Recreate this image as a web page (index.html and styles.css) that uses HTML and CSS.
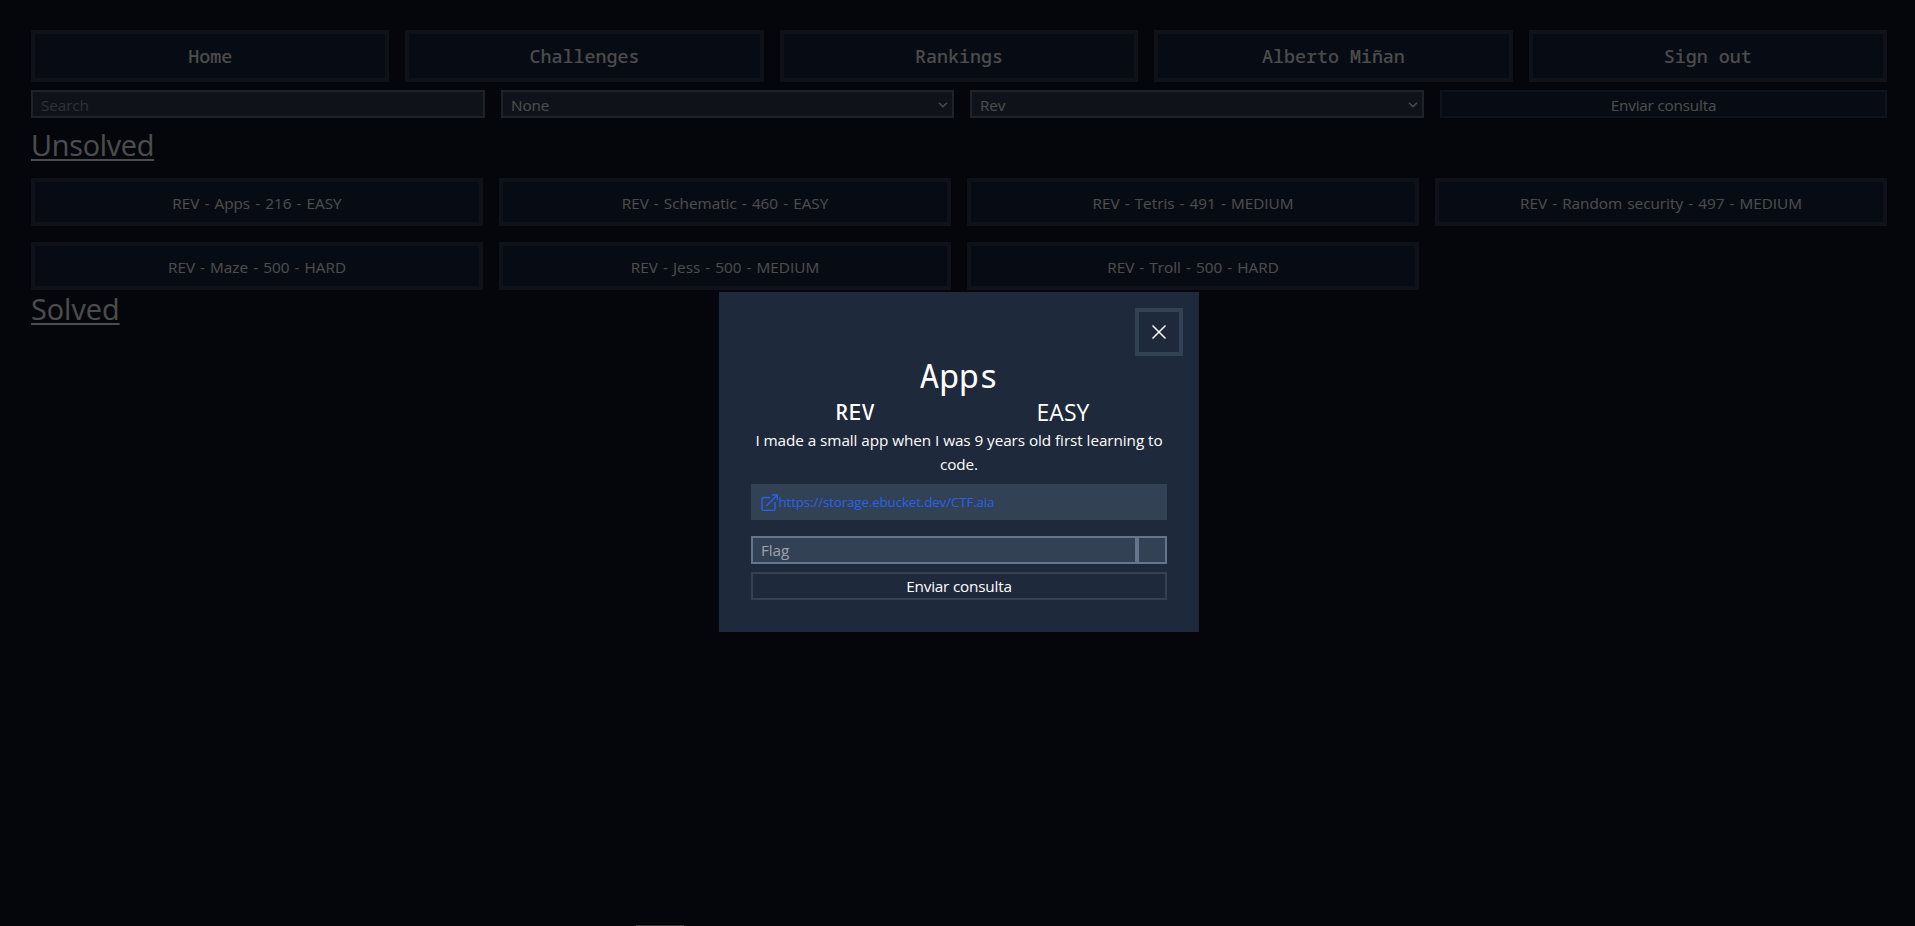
FILE: index.html
```html
<!DOCTYPE html>
<html lang="es">
<head>
<meta charset="utf-8">
<title>Challenges</title>
<link rel="stylesheet" href="styles.css">
</head>
<body>
<div class="page">
  <nav class="nav">
    <a class="nav-link">Home</a>
    <a class="nav-link">Challenges</a>
    <a class="nav-link">Rankings</a>
    <a class="nav-link">Alberto Miñan</a>
    <a class="nav-link">Sign out</a>
  </nav>
  <form class="filters">
    <input class="field" type="text" placeholder="Search">
    <div class="field select"><span>None</span><svg class="chevron" viewBox="0 0 10 6"><path d="M1 0.8 5 4.8 9 0.8"/></svg></div>
    <div class="field select"><span>Rev</span><svg class="chevron" viewBox="0 0 10 6"><path d="M1 0.8 5 4.8 9 0.8"/></svg></div>
    <button class="submit" type="button">Enviar consulta</button>
  </form>
  <h2 class="heading">Unsolved</h2>
  <div class="cards">
    <button class="card">REV - Apps - 216 - EASY</button>
    <button class="card">REV - Schematic - 460 - EASY</button>
    <button class="card">REV - Tetris - 491 - MEDIUM</button>
    <button class="card">REV - Random security - 497 - MEDIUM</button>
    <button class="card">REV - Maze - 500 - HARD</button>
    <button class="card">REV - Jess - 500 - MEDIUM</button>
    <button class="card">REV - Troll - 500 - HARD</button>
  </div>
  <h2 class="heading solved">Solved</h2>
</div>
<div class="overlay">
  <section class="modal">
    <button class="close" aria-label="Close"><svg viewBox="0 0 16 16"><path d="M1.500 1.500 14.500 14.500M14.500 1.500 1.500 14.500"/></svg></button>
    <h1 class="title">Apps</h1>
    <div class="meta"><span class="category">REV</span><span class="difficulty">EASY</span></div>
    <p class="description">I made a small app when I was 9 years old first learning to code.</p>
    <a class="file"><svg class="file-icon" viewBox="0 0 17 17"><path d="M9 3.500H2.500A1.500 1.500 0 0 0 1 5V15A1.500 1.500 0 0 0 2.500 16.500H12.500A1.500 1.500 0 0 0 14 15V8M11 1H16.300V6.300M16.300 1 5 12.300"/></svg><span>https://storage.ebucket.dev/CTF.aia</span></a>
    <form class="flag-form">
      <div class="flag-row"><input class="field flag" type="text" placeholder="Flag"><div class="field status"></div></div>
      <button class="submit" type="button">Enviar consulta</button>
    </form>
  </section>
</div>
<div class="handle"></div>
</body>
</html>
```
FILE: styles.css
```css
* { box-sizing: border-box; margin: 0; padding: 0; }
html, body { height: 100%; overflow: hidden; }
body {
  background: #0f172a;
  color: #fff;
  font: 15.3px/24px "Open Sans", "Noto Sans", sans-serif;
}
button, input { font: inherit; color: inherit; letter-spacing: inherit; }
.page { height: 100%; padding: 30px 28px 0 31px; }
.nav { display: grid; grid-template-columns: repeat(5, 1fr); gap: 16px; }
.nav-link {
  height: 52px;
  border: 4px solid #334155;
  background: #1a2540;
  font: 500 18.33px/44px "Noto Sans Mono", "DejaVu Sans Mono", monospace;
  text-align: center;
}
.filters { display: grid; grid-template-columns: 454px 453px 454px 1fr; gap: 16px; margin-top: 8px; }
.field { height: 28px; border: 2px solid #64748b; background: #334155; padding: 1px 8px 0; min-width: 0; border-radius: 0; outline: 0; letter-spacing: -.1px; }
.field::placeholder { color: #9ca3af; }
.select { display: flex; align-items: center; justify-content: space-between; padding-right: 4px; }
.chevron { width: 10px; height: 6px; fill: none; stroke: #fff; stroke-width: 1.4; }
.submit { height: 28px; border: 2px solid #334155; background: #1e293b; text-align: center; line-height: 24px; letter-spacing: -.2px; }
.filters .submit { padding-top: 1px; background: #1a2540; }
.heading { height: 36px; margin-top: 9px; font-size: 28.8px; line-height: 36px; font-weight: 400; letter-spacing: -.25px; text-decoration: underline; text-decoration-thickness: 2px; text-underline-offset: 3px; }
.cards { display: grid; grid-template-columns: repeat(4, 1fr); gap: 16px; margin-top: 15px; }
.card { height: 48px; padding-top: 1px; border: 4px solid #334155; background: #1a2540; word-spacing: 1.1px; }
.solved { margin-top: 1px; letter-spacing: 0; }
.overlay { position: fixed; inset: 0; display: flex; justify-content: center; align-items: flex-start; padding: 292px 0 0 3px; background: rgba(0, 0, 0, .7); }
.modal { display: flex; flex-direction: column; width: 480px; height: 340px; padding: 16px 32px 32px; background: #1e293b; }
.close { align-self: flex-end; flex: none; display: grid; place-items: center; width: 48px; height: 48px; margin-right: -16px; border: 4px solid #334155; background: #1e293b; }
.close svg { width: 16px; height: 16px; fill: none; stroke: #fff; stroke-width: 1.5; }
.title { height: 40px; font: 33px/40px "Noto Sans Mono", "DejaVu Sans Mono", monospace; text-align: center; }
.meta { display: grid; grid-template-columns: 1fr 1fr; height: 32px; line-height: 32px; text-align: center; }
.category { font: 500 22px/30px "Noto Sans Mono", "DejaVu Sans Mono", monospace; }
.difficulty { font-size: 23px; }
.description { height: 48px; text-align: center; letter-spacing: -.07px; }
.file { display: flex; align-items: center; gap: 1px; height: 36px; margin-top: 8px; padding: 0 8px 0 9.500px; background: #334155; color: #2563eb; font-size: 13.4px; letter-spacing: -.15px; }
.file-icon { flex: none; width: 17px; height: 17px; fill: none; stroke: #2563eb; stroke-width: 1.4; }
.flag-form { display: flex; flex-direction: column; gap: 8px; margin-top: 16px; }
.flag-row { display: flex; }
.flag { flex: 1; padding-top: 0; }
.status { width: 30px; }
.handle { position: fixed; left: 636px; bottom: 0; width: 48px; height: 1px; background: #333; }
```
